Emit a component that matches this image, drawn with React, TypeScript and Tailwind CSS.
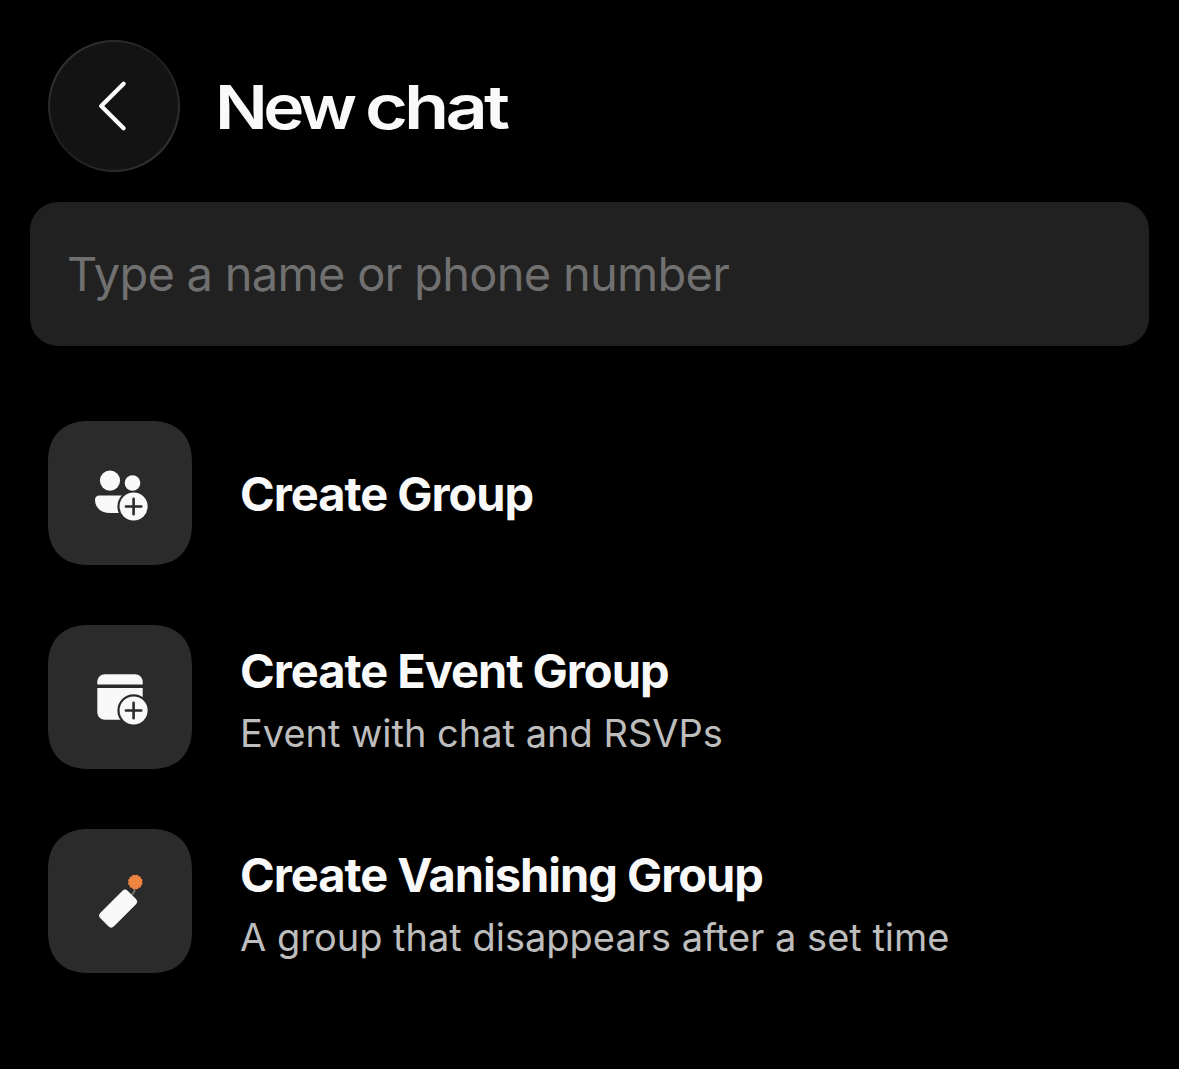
import type { ReactNode } from "react";

function PlusBadge() {
  return (
    <>
      <circle cx="85.6" cy="85.5" r="16.2" fill="#2b2b2b" />
      <circle cx="85.6" cy="85.5" r="14" fill="#f9f9f9" />
      <path
        d="M77.9 85.5H93.3M85.6 77.8V93.2"
        stroke="#2b2b2b"
        strokeWidth="2.6"
        strokeLinecap="round"
      />
    </>
  );
}

function GroupIcon() {
  return (
    <svg viewBox="0 0 144 144" fill="none" className="size-36">
      <circle cx="62" cy="59.6" r="10.1" fill="#f9f9f9" />
      <path
        d="M51.2 74.4H76V92H62C53.5 92 47 87.2 47 78.8C47 76.2 48.7 74.4 51.2 74.4Z"
        fill="#f9f9f9"
      />
      <PlusBadge />
      <circle cx="84.5" cy="62" r="7.8" fill="#f9f9f9" />
    </svg>
  );
}

function EventIcon() {
  return (
    <svg viewBox="0 0 144 144" fill="none" className="size-36">
      <path
        d="M49.3 59.5V57.3C49.3 52.6 52.4 49.3 57.3 49.3H86.7C91.6 49.3 94.7 52.6 94.7 57.3V59.5Z"
        fill="#f9f9f9"
      />
      <path
        d="M49.3 63H94.7V94.7H57.3C52.4 94.7 49.3 91.6 49.3 86.7Z"
        fill="#f9f9f9"
      />
      <PlusBadge />
    </svg>
  );
}

function VanishingIcon() {
  return (
    <svg viewBox="0 0 144 144" fill="none" className="size-36">
      <path d="M83.8 66L86.2 62.8L87 59" stroke="#777777" strokeWidth="1.8" />
      <rect
        x="50.7"
        y="70"
        width="38.8"
        height="19.2"
        rx="4"
        fill="#f9f9f9"
        transform="rotate(-45 70.1 79.6)"
      />
      <g fill="#ef8543">
        <circle cx="87.3" cy="53" r="6" />
        {Array.from({ length: 12 }, (_, i) => (
          <circle
            key={i}
            cx="87.3"
            cy="47.4"
            r="1.8"
            transform={`rotate(${i * 30 + 15} 87.3 53)`}
          />
        ))}
      </g>
    </svg>
  );
}

type ActionProps = {
  icon: ReactNode;
  title: string;
  subtitle?: string;
};

function Action({ icon, title, subtitle }: ActionProps) {
  return (
    <button className="flex h-36 items-center text-left">
      <span className="size-36 shrink-0 rounded-[42px] bg-[#2b2b2b] [corner-shape:superellipse(1.25)]">
        {icon}
      </span>
      <span className="ml-12 flex flex-col pt-px whitespace-nowrap">
        <span className="text-[47px] leading-[60px] font-[670] tracking-[-1.02px] text-[#f9f9f9]">
          {title}
        </span>
        {subtitle && (
          <span className="mt-[5px] -mb-[5px] text-[38px] leading-[54px] text-[#bdbdbd]">
            {subtitle}
          </span>
        )}
      </span>
    </button>
  );
}

export default function App() {
  return (
    <div className="h-[1069px] w-[1179px] overflow-hidden bg-black font-['Inter',sans-serif]">
      <header className="flex items-center pt-10 pl-12">
        <button
          aria-label="Back"
          className="size-[132px] rounded-full bg-linear-to-br from-[#3a3a3a] via-[#1d1d1d] to-[#3a3a3a] p-0.5"
        >
          <span className="flex size-full items-center justify-center rounded-full bg-[#131313]">
            <svg viewBox="0 0 128 128" fill="none" className="size-full">
              <path
                d="M73.6 41.8L51.2 64L73.6 86.2"
                stroke="#fcfcfc"
                strokeWidth="4.3"
                strokeLinecap="round"
                strokeLinejoin="round"
              />
            </svg>
          </span>
        </button>
        <h1 className="mt-0.5 ml-[34.5px] flex text-[61px] leading-[72px] font-semibold whitespace-nowrap text-[#f9f9f9]">
          <span className="w-[150px] origin-left scale-x-[1.14] tracking-[-4px]">
            New{" "}
          </span>
          <span className="origin-left scale-x-[1.21] tracking-[-3.2px]">chat</span>
        </h1>
      </header>

      <div className="mx-[30px] mt-[30px] flex h-36 items-center rounded-[28px] bg-[#212121] px-[37px]">
        <input
          type="text"
          placeholder="Type a name or phone number"
          className="w-full bg-transparent text-[47px] leading-[60px] tracking-[-0.72px] text-white outline-none placeholder:text-[#707070]"
        />
      </div>

      <div className="mt-[75px] flex flex-col gap-[60px] pl-12">
        <Action icon={<GroupIcon />} title="Create Group" />
        <Action
          icon={<EventIcon />}
          title="Create Event Group"
          subtitle="Event with chat and RSVPs"
        />
        <Action
          icon={<VanishingIcon />}
          title="Create Vanishing Group"
          subtitle="A group that disappears after a set time"
        />
      </div>
    </div>
  );
}
